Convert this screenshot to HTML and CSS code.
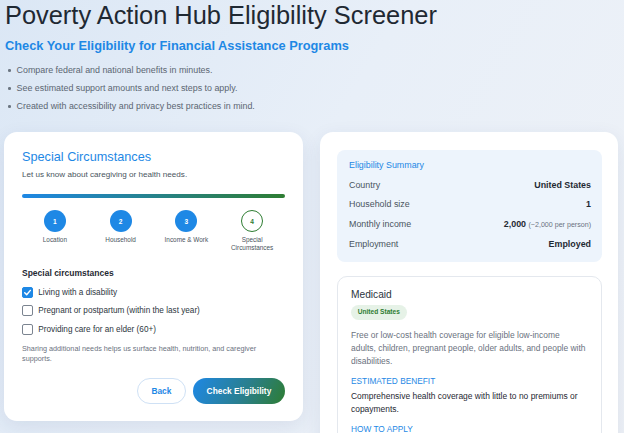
FILE: index.html
```html
<!DOCTYPE html>
<html lang="en">
<head>
<meta charset="utf-8">
<title>Poverty Action Hub Eligibility Screener</title>
<link rel="stylesheet" href="styles.css">
</head>
<body>
<div class="page">
  <header class="hero">
    <h1 class="hero-title">Poverty Action Hub Eligibility Screener</h1>
    <h2 class="hero-subtitle">Check Your Eligibility for Financial Assistance Programs</h2>
    <ul class="perks">
      <li>Compare federal and national benefits in minutes.</li>
      <li>See estimated support amounts and next steps to apply.</li>
      <li>Created with accessibility and privacy best practices in mind.</li>
    </ul>
  </header>

  <main class="layout">
    <section class="card wizard">
      <h3 class="wizard-title">Special Circumstances</h3>
      <p class="wizard-lead">Let us know about caregiving or health needs.</p>
      <div class="progress"></div>
      <ol class="steps">
        <li class="step is-done"><span class="step-dot">1</span><span class="step-label">Location</span></li>
        <li class="step is-done"><span class="step-dot">2</span><span class="step-label">Household</span></li>
        <li class="step is-done"><span class="step-dot">3</span><span class="step-label">Income &amp; Work</span></li>
        <li class="step is-current"><span class="step-dot">4</span><span class="step-label">Special<br>Circumstances</span></li>
      </ol>

      <h4 class="field-title">Special circumstances</h4>
      <div class="options">
        <label class="option">
          <span class="box is-checked">
            <svg viewBox="0 0 12 12" width="9" height="9"><path d="M2.3 6.3 L4.9 8.9 L9.8 3.2" fill="none" stroke="#fff" stroke-width="1.9" stroke-linecap="round" stroke-linejoin="round"/></svg>
          </span>
          Living with a disability
        </label>
        <label class="option"><span class="box"></span>Pregnant or postpartum (within the last year)</label>
        <label class="option"><span class="box"></span>Providing care for an elder (60+)</label>
      </div>
      <p class="helper">Sharing additional needs helps us surface health, nutrition, and caregiver supports.</p>

      <div class="actions">
        <button class="btn btn-ghost" type="button">Back</button>
        <button class="btn btn-primary" type="button">Check Eligibility</button>
      </div>
    </section>

    <aside class="card results">
      <div class="summary">
        <div class="summary-title">Eligibility Summary</div>
        <div class="summary-row"><span class="summary-key">Country</span><span class="summary-val">United States</span></div>
        <div class="summary-row"><span class="summary-key">Household size</span><span class="summary-val">1</span></div>
        <div class="summary-row"><span class="summary-key">Monthly income</span><span class="summary-val">2,000 <small class="summary-note">(~2,000 per person)</small></span></div>
        <div class="summary-row"><span class="summary-key">Employment</span><span class="summary-val">Employed</span></div>
      </div>

      <article class="program">
        <h3 class="program-name">Medicaid</h3>
        <span class="badge">United States</span>
        <p class="program-desc">Free or low-cost health coverage for eligible low-income<br>adults, children, pregnant people, older adults, and people with<br>disabilities.</p>
        <div class="program-label">ESTIMATED BENEFIT</div>
        <p class="program-text">Comprehensive health coverage with little to no premiums or<br>copayments.</p>
        <div class="program-label label-gap">HOW TO APPLY</div>
      </article>
    </aside>
  </main>
</div>
</body>
</html>
```

FILE: styles.css
```css
* { box-sizing: border-box; }

html, body {
  margin: 0;
  padding: 0;
}

body {
  font-family: "Liberation Sans", Arial, sans-serif;
  color: #1f2933;
  background: linear-gradient(120deg, #dbe7f5 0%, #e8eff8 45%, #eff2f7 100%);
  min-height: 433px;
  overflow: hidden;
}

.page {
  padding: 0.5px 6px 0 4px;
}

/* ---------- hero ---------- */
.hero-title {
  margin: 0 0 0 1px;
  font-size: 25.4px;
  font-weight: 400;
  line-height: 1.15;
  color: #1f2933;
  white-space: nowrap;
}

.hero-subtitle {
  margin: 9px 0 0 1px;
  font-size: 12.8px;
  font-weight: 700;
  line-height: 1.15;
  color: #1e88e5;
}

.perks {
  list-style: none;
  margin: 8px 0 0;
  padding: 0;
}

.perks li {
  display: flex;
  align-items: center;
  gap: 5px;
  font-size: 8.9px;
  line-height: 18px;
  color: #5b6672;
  padding-left: 4px;
}

.perks li::before {
  content: "";
  width: 2.6px;
  height: 2.6px;
  border-radius: 50%;
  background: #6b7682;
  flex: none;
  margin-right: 1px;
}

/* ---------- layout ---------- */
.layout {
  display: grid;
  grid-template-columns: 299px 298px;
  column-gap: 17px;
  align-items: start;
  margin-top: 17px;
}

.card {
  background: #fff;
  border-radius: 13px;
  box-shadow: 0 6px 20px rgba(30, 60, 110, 0.09);
}

/* ---------- wizard ---------- */
.wizard {
  padding: 18px 18px 17px;
}

.wizard-title {
  margin: 0;
  font-size: 12.7px;
  font-weight: 400;
  line-height: 1.15;
  color: #1e88e5;
}

.wizard-lead {
  margin: 5px 0 0;
  font-size: 8.1px;
  line-height: 1.15;
  color: #4a5560;
}

.progress {
  margin-top: 14.7px;
  height: 4.5px;
  border-radius: 3px;
  background: linear-gradient(90deg, #1e88e5 0%, #2e7d32 100%);
}

.steps {
  list-style: none;
  margin: 11.7px 0 0;
  padding: 0;
  display: grid;
  grid-template-columns: repeat(4, 1fr);
}

.step {
  display: flex;
  flex-direction: column;
  align-items: center;
  text-align: center;
}

.step-dot {
  width: 22px;
  height: 22px;
  border-radius: 50%;
  display: flex;
  align-items: center;
  justify-content: center;
  font-size: 6.6px;
  font-weight: 700;
  background: #1e88e5;
  color: #fff;
}

.step.is-current .step-dot {
  background: #fff;
  color: #2e7d32;
  border: 1.2px solid #2e7d32;
}

.step-label {
  margin-top: 3.5px;
  font-size: 6.4px;
  line-height: 8.7px;
  color: #4a5560;
}

.field-title {
  margin: 15px 0 0;
  font-size: 8.5px;
  font-weight: 700;
  line-height: 10px;
  color: #1f2933;
}

.options {
  margin-top: 4.8px;
  display: flex;
  flex-direction: column;
}

.option {
  display: flex;
  align-items: center;
  gap: 5.3px;
  height: 18.5px;
  font-size: 8.2px;
  color: #2d3640;
}

.box {
  width: 11px;
  height: 11px;
  border: 1px solid #7b8490;
  border-radius: 2px;
  background: #fff;
  display: flex;
  align-items: center;
  justify-content: center;
  flex: none;
}

.box.is-checked {
  background: #1e88e5;
  border-color: #1e88e5;
}

.helper {
  margin: 5.8px 0 0;
  padding-right: 12px;
  font-size: 7.25px;
  line-height: 10.3px;
  color: #6b7280;
}

.actions {
  margin-top: 13.5px;
  display: flex;
  justify-content: flex-end;
  gap: 7px;
}

.btn {
  height: 26px;
  border-radius: 999px;
  font-family: inherit;
  font-size: 8.4px;
  font-weight: 700;
  padding: 0 13.5px;
  cursor: pointer;
}

.btn-ghost {
  background: #fff;
  color: #1e88e5;
  border: 1px solid #cfe1f5;
}

.btn-primary {
  border: 0;
  color: #fff;
  padding: 0 13.7px;
  background: linear-gradient(115deg, #1e88e5 0%, #2a7f8f 55%, #2e7d32 100%);
}

/* ---------- results ---------- */
.results {
  padding: 18px 16px 40px 17px;
  min-height: 320px;
}

.summary {
  background: #edf4fc;
  border-radius: 8px;
  padding: 6px 11px 8px 12px;
}

.summary-title {
  font-size: 8.9px;
  line-height: 19.4px;
  color: #1e88e5;
}

.summary-row {
  display: flex;
  justify-content: space-between;
  align-items: baseline;
  font-size: 8.9px;
  line-height: 19.4px;
}

.summary-key {
  color: #4a5560;
}

.summary-val {
  font-weight: 700;
  color: #1f2933;
}

.summary-note {
  font-size: 7.1px;
  font-weight: 400;
  color: #6b7280;
}

.program {
  margin-top: 13.3px;
  border: 1px solid #e4e8ee;
  border-radius: 10px;
  padding: 12px 12px 12px 13px;
}

.program-name {
  margin: 0;
  font-size: 10.2px;
  font-weight: 400;
  line-height: 11.7px;
  color: #2d3640;
}

.badge {
  display: inline-block;
  margin-top: 4px;
  height: 14.4px;
  line-height: 14.4px;
  padding: 0 6.7px;
  border-radius: 999px;
  background: #e6f2e7;
  color: #2e7d32;
  font-size: 6.6px;
  font-weight: 700;
}

.program-desc {
  margin: 9px 0 0;
  font-size: 8.45px;
  line-height: 13px;
  color: #6b7280;
  white-space: nowrap;
}

.program-label {
  margin-top: 6.7px;
  font-size: 8.3px;
  line-height: 13px;
  color: #1e88e5;
}

.program-text {
  margin: 2px 0 0;
  font-size: 8.45px;
  line-height: 13px;
  color: #1f2933;
  white-space: nowrap;
}

.label-gap {
  margin-top: 7px;
}
```
